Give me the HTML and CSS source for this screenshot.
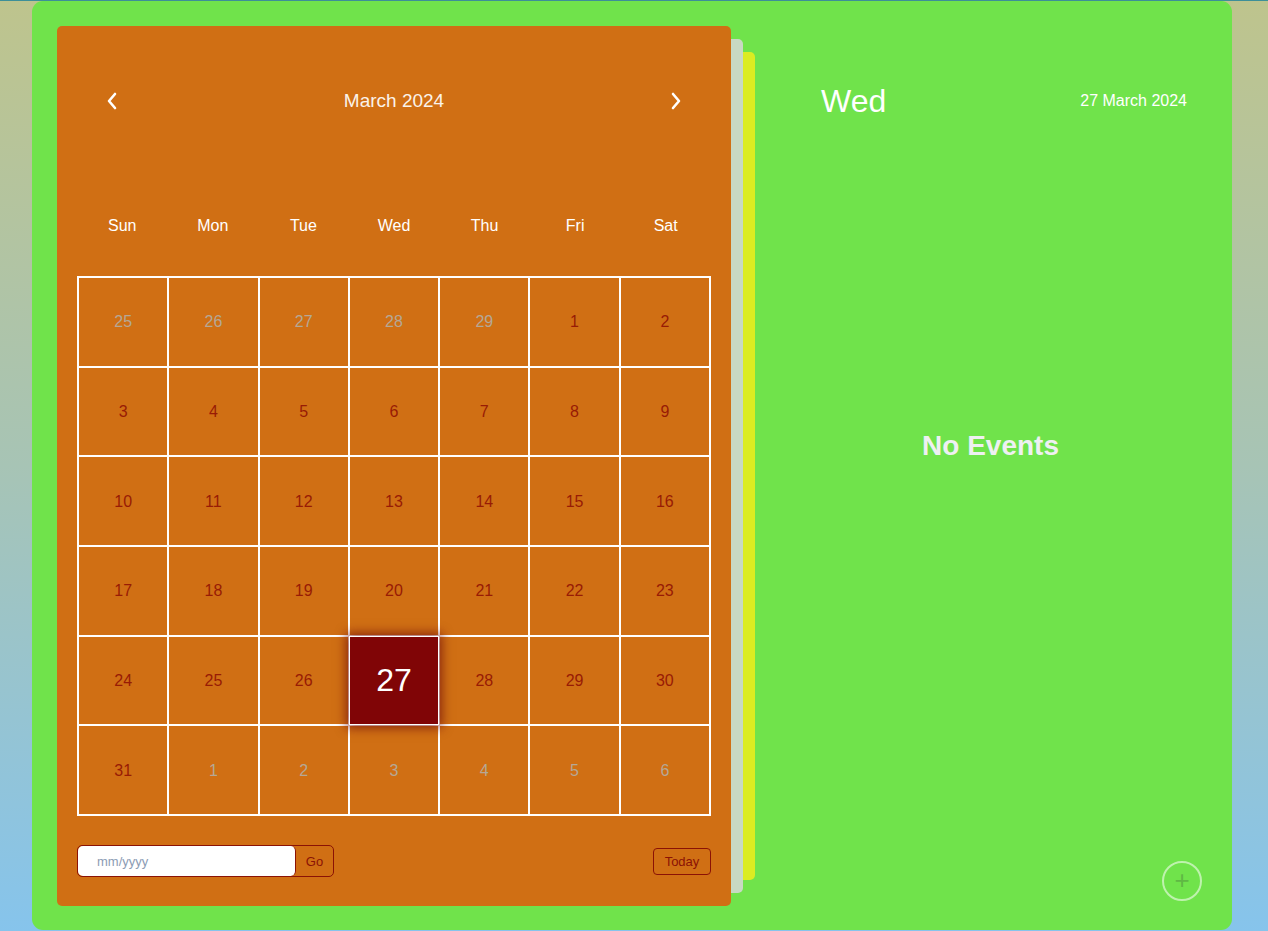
FILE: index.html
```html
<!DOCTYPE html>
<html lang="en">
<head>
<meta charset="utf-8">
<title>Calendar</title>
<link rel="stylesheet" href="styles.css">
</head>
<body>
<div class="app">
  <section class="calendar">
    <div class="cal-head">
      <button class="nav" aria-label="Previous month">
        <svg width="12" height="18" viewBox="0 0 12 18"><path d="M9 2 L3 9 L9 16" fill="none" stroke="#fff" stroke-width="2.6" stroke-linecap="round" stroke-linejoin="round"/></svg>
      </button>
      <div class="month">March 2024</div>
      <button class="nav" aria-label="Next month">
        <svg width="12" height="18" viewBox="0 0 12 18"><path d="M3 2 L9 9 L3 16" fill="none" stroke="#fff" stroke-width="2.6" stroke-linecap="round" stroke-linejoin="round"/></svg>
      </button>
    </div>
    <div class="weekdays">
      <span>Sun</span><span>Mon</span><span>Tue</span><span>Wed</span><span>Thu</span><span>Fri</span><span>Sat</span>
    </div>
    <div class="days">
      <div class="day other">25</div><div class="day other">26</div><div class="day other">27</div><div class="day other">28</div><div class="day other">29</div><div class="day">1</div><div class="day">2</div>
      <div class="day">3</div><div class="day">4</div><div class="day">5</div><div class="day">6</div><div class="day">7</div><div class="day">8</div><div class="day">9</div>
      <div class="day">10</div><div class="day">11</div><div class="day">12</div><div class="day">13</div><div class="day">14</div><div class="day">15</div><div class="day">16</div>
      <div class="day">17</div><div class="day">18</div><div class="day">19</div><div class="day">20</div><div class="day">21</div><div class="day">22</div><div class="day">23</div>
      <div class="day">24</div><div class="day">25</div><div class="day">26</div><div class="day today">27</div><div class="day">28</div><div class="day">29</div><div class="day">30</div>
      <div class="day">31</div><div class="day other">1</div><div class="day other">2</div><div class="day other">3</div><div class="day other">4</div><div class="day other">5</div><div class="day other">6</div>
    </div>
    <div class="cal-foot">
      <div class="goto">
        <input class="goto-input" type="text" placeholder="mm/yyyy">
        <button class="goto-btn">Go</button>
      </div>
      <button class="today-btn">Today</button>
    </div>
  </section>
  <section class="events">
    <div class="events-head">
      <div class="event-day">Wed</div>
      <div class="event-date">27 March 2024</div>
    </div>
    <div class="no-events">No Events</div>
    <button class="add-btn" aria-label="Add event">+</button>
  </section>
</div>
</body>
</html>
```

FILE: styles.css
```css
* { box-sizing: border-box; }

html, body { height: 100%; }

body {
  margin: 0;
  border-top: 1px solid #3d8f98;
  background: linear-gradient(to bottom, #bec48d 0%, #a7c4b5 50%, #86c4ec 100%);
  font-family: "Liberation Sans", Arial, sans-serif;
  overflow: hidden;
}

.app {
  position: relative;
  z-index: 0;
  width: 1200px;
  height: 929px;
  margin: 0 0 0 32px;
  padding: 25px 0 0 25px;
  background: #70e34b;
  border-radius: 11px;
  display: flex;
  align-items: flex-start;
}

.calendar {
  position: relative;
  width: 674px;
  height: 880px;
  padding: 20px 20px 0 20px;
  background: #d06f14;
  border-radius: 5px;
}

.calendar::before {
  content: "";
  position: absolute;
  top: 26px;
  bottom: 26px;
  right: -24px;
  width: 60px;
  background: #dbec22;
  border-radius: 5px;
  z-index: -2;
}

.calendar::after {
  content: "";
  position: absolute;
  top: 13px;
  bottom: 13px;
  right: -12px;
  width: 60px;
  background: #c8d9c3;
  border-radius: 5px;
  z-index: -1;
}

.cal-head {
  height: 110px;
  padding: 0 29px;
  display: flex;
  align-items: center;
  justify-content: space-between;
}

.nav {
  background: none;
  border: none;
  padding: 0;
  width: 12px;
  height: 18px;
  display: flex;
  cursor: pointer;
}

.month {
  color: #fbf3ea;
  font-size: 19px;
}

.weekdays {
  margin-top: 41px;
  height: 58px;
  display: grid;
  grid-template-columns: repeat(7, 1fr);
  align-items: center;
  color: #fff;
  font-size: 16px;
  text-align: center;
}

.days {
  margin-top: 21px;
  width: 634px;
  height: 540px;
  border: 1px solid #fff;
  display: grid;
  grid-template-columns: repeat(7, 1fr);
  grid-template-rows: repeat(6, 1fr);
}

.day {
  border: 1px solid #fff;
  display: flex;
  align-items: center;
  justify-content: center;
  color: #981b05;
  font-size: 16px;
  padding-top: 1px;
}

.day.other {
  color: #b5a896;
}

.day.today {
  position: relative;
  background: #800506;
  color: #fff;
  font-size: 32px;
  box-shadow: 0 0 10px 3px rgba(110, 10, 10, 0.7);
}

.cal-foot {
  margin-top: 29px;
  display: flex;
  align-items: center;
  justify-content: space-between;
}

.goto {
  display: flex;
  width: 257px;
  height: 32px;
  border: 1px solid #8b1205;
  border-radius: 5px;
}

.goto-input {
  width: 218px;
  height: 30px;
  border: none;
  border-right: 1px solid #8b1205;
  border-radius: 5px;
  padding: 0 0 0 19px;
  font-family: "Liberation Sans", Arial, sans-serif;
  font-size: 13px;
  outline: none;
  background: #fff;
}

.goto-input::placeholder {
  color: #8c9cb4;
}

.goto-btn {
  flex: 1;
  background: none;
  border: none;
  padding: 0;
  color: #8b1205;
  font-family: "Liberation Sans", Arial, sans-serif;
  font-size: 13px;
}

.today-btn {
  width: 58px;
  height: 27px;
  background: none;
  border: 1px solid #8b1205;
  border-radius: 4px;
  padding: 0;
  color: #8b1205;
  font-family: "Liberation Sans", Arial, sans-serif;
  font-size: 13px;
}

.events {
  flex: 1;
  height: 880px;
  margin-left: 24px;
  color: #fff;
}

.events-head {
  height: 150px;
  padding: 0 45px 0 66px;
  display: flex;
  align-items: center;
  justify-content: space-between;
}

.event-day {
  font-size: 32px;
}

.event-date {
  font-size: 16px;
}

.no-events {
  margin-top: 254px;
  padding-right: 6px;
  text-align: center;
  font-size: 28px;
  font-weight: bold;
  color: #eef0f2;
}

.add-btn {
  position: absolute;
  right: 30px;
  bottom: 29px;
  width: 40px;
  height: 40px;
  border-radius: 50%;
  border: 2px solid rgba(255, 255, 255, 0.55);
  background: none;
  padding: 0 0 2px 0;
  color: #5fb844;
  font-family: "Liberation Sans", Arial, sans-serif;
  font-size: 26px;
  line-height: 1;
  display: flex;
  align-items: center;
  justify-content: center;
}
```
